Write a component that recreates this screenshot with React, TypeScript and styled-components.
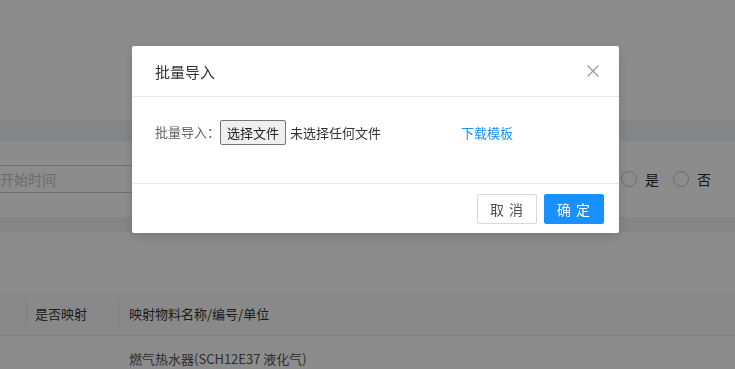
import styled, { createGlobalStyle } from "styled-components";

const GlobalStyle = createGlobalStyle`
    html, body {
        margin: 0;
        padding: 0;
        background: #fff;
        font-family: "Noto Sans CJK SC", "Liberation Sans", sans-serif;
        overflow: hidden;
    }
`;

const Page = () => {
    return (
        <PageWrapper>
            <div className="top-area" />
            <Band $height={22} />
            <FilterCard>
                <DateInput>开始时间</DateInput>
                <RadioGroup>
                    <RadioItem>
                        <RadioDot />
                        是
                    </RadioItem>
                    <RadioItem>
                        <RadioDot />
                        否
                    </RadioItem>
                </RadioGroup>
            </FilterCard>
            <Band $height={15} />
            <TableCard>
                <HeaderRow>
                    <HeaderCell $width={27} />
                    <HeaderCell $width={93}>是否映射</HeaderCell>
                    <HeaderCell $width={400}>映射物料名称/编号/单位</HeaderCell>
                </HeaderRow>
                <BodyRow>
                    <BodyCell $width={120} />
                    <BodyCell $width={400}>燃气热水器(SCH12E37 液化气)</BodyCell>
                </BodyRow>
            </TableCard>
        </PageWrapper>
    );
};

const ImportModal = () => {
    return (
        <Mask>
            <ModalBox>
                <ModalHeader>
                    <span>批量导入</span>
                    <CloseButton aria-label="close">
                        <svg width="12" height="12" viewBox="0 0 12 12">
                            <path
                                d="M0.5 0.5 L11.5 11.5 M11.5 0.5 L0.5 11.5"
                                stroke="currentColor"
                                strokeWidth="1.2"
                                fill="none"
                            />
                        </svg>
                    </CloseButton>
                </ModalHeader>
                <ModalBody>
                    <FieldLabel>批量导入：</FieldLabel>
                    <FileField>
                        <FileButton type="button">选择文件</FileButton>
                        <span>未选择任何文件</span>
                    </FileField>
                    <DownloadLink href="#">下载模板</DownloadLink>
                </ModalBody>
                <ModalFooter>
                    <ActionButton>取 消</ActionButton>
                    <ActionButton $primary>确 定</ActionButton>
                </ModalFooter>
            </ModalBox>
        </Mask>
    );
};

const App = () => {
    return (
        <>
            <GlobalStyle />
            <Page />
            <ImportModal />
        </>
    );
};

const PageWrapper = styled.main`
    width: 735px;
    height: 369px;
    overflow: hidden;
    font-size: 13px;

    .top-area {
        height: 120px;
        background: #fff;
    }
`;

const Band = styled.div<{ $height: number }>`
    height: ${(p) => p.$height}px;
    background: #f0f2f5;
`;

const FilterCard = styled.section`
    height: 75px;
    background: #fff;
    display: flex;
    align-items: flex-start;
    justify-content: space-between;
    padding-top: 23px;
    box-sizing: border-box;
`;

const DateInput = styled.div`
    width: 330px;
    height: 28px;
    margin-left: -20px;
    box-sizing: border-box;
    border: 1px solid #c8cbd1;
    border-radius: 3px;
    padding-left: 19px;
    display: flex;
    align-items: center;
    color: #c0c4cc;
    font-size: 14px;
`;

const RadioGroup = styled.div`
    display: flex;
    align-items: center;
    gap: 14px;
    height: 28px;
    margin-right: 24px;
`;

const RadioItem = styled.label`
    display: flex;
    align-items: center;
    gap: 8px;
    font-size: 14px;
    color: #262626;
`;

const RadioDot = styled.span`
    width: 14px;
    height: 14px;
    border: 1px solid #c6c9cf;
    border-radius: 50%;
    background: #fff;
`;

const TableCard = styled.section`
    background: #fff;
    padding-top: 59px;
    height: 200px;
`;

const HeaderRow = styled.div`
    display: flex;
    height: 44px;
    background: #fafafa;
    border-bottom: 1px solid #e8e8e8;
`;

const HeaderCell = styled.div<{ $width: number }>`
    position: relative;
    width: ${(p) => p.$width}px;
    display: flex;
    align-items: center;
    padding-left: 8px;
    box-sizing: border-box;
    color: #333;

    &:last-child {
        padding-left: 9px;
    }

    &:not(:last-child)::after {
        content: "";
        position: absolute;
        right: 0;
        top: 50%;
        width: 1px;
        height: 26px;
        transform: translateY(-50%);
        background: #ececec;
    }
`;

const BodyRow = styled.div`
    display: flex;
    height: 44px;
`;

const BodyCell = styled.div<{ $width: number }>`
    width: ${(p) => p.$width}px;
    display: flex;
    align-items: center;
    padding-left: 9px;
    box-sizing: border-box;
    color: #555;
`;

const Mask = styled.div`
    position: fixed;
    inset: 0;
    background: rgba(0, 0, 0, 0.45);
    display: flex;
    align-items: flex-start;
`;

const ModalBox = styled.div`
    margin: 46px 0 0 132px;
    width: 487px;
    background: #fff;
    border-radius: 2px;
    box-shadow: 0 4px 12px rgba(0, 0, 0, 0.15);
    display: flex;
    flex-direction: column;
`;

const ModalHeader = styled.div`
    height: 51px;
    box-sizing: border-box;
    border-bottom: 1px solid #e8e8e8;
    display: flex;
    align-items: center;
    justify-content: space-between;
    padding: 0 20px 0 23px;
    font-size: 15px;
    color: #333;
`;

const CloseButton = styled.button`
    border: none;
    background: none;
    padding: 0;
    width: 12px;
    height: 12px;
    color: #999;
    display: flex;
    cursor: pointer;
`;

const ModalBody = styled.div`
    height: 86px;
    box-sizing: border-box;
    padding: 23px 23px 0;
    display: flex;
    align-items: flex-start;
    font-size: 13px;
`;

const FieldLabel = styled.span`
    height: 25px;
    line-height: 23px;
    color: #606266;
    width: 65px;
`;

const FileField = styled.div`
    display: flex;
    align-items: center;
    gap: 4px;
    width: 241px;
    height: 25px;
    color: #333;
`;

const FileButton = styled.button`
    width: 66px;
    height: 25px;
    box-sizing: border-box;
    border: 1px solid #767676;
    border-radius: 2px;
    background: #efefef;
    color: #222;
    font-family: inherit;
    font-size: 13px;
    padding: 0;
`;

const DownloadLink = styled.a`
    height: 25px;
    line-height: 25px;
    color: #1890ff;
    text-decoration: none;
`;

const ModalFooter = styled.div`
    border-top: 1px solid #e8e8e8;
    padding: 10px 15px 9px;
    display: flex;
    justify-content: flex-end;
    gap: 7px;
`;

const ActionButton = styled.button<{ $primary?: boolean }>`
    width: 60px;
    height: 30px;
    box-sizing: border-box;
    border-radius: 2px;
    font-family: inherit;
    font-size: 14px;
    letter-spacing: 1px;
    cursor: pointer;
    border: 1px solid ${(p) => (p.$primary ? "#1890ff" : "#d9d9d9")};
    background: ${(p) => (p.$primary ? "#1890ff" : "#fff")};
    color: ${(p) => (p.$primary ? "#fff" : "rgba(0, 0, 0, 0.7)")};
`;

export default App;
